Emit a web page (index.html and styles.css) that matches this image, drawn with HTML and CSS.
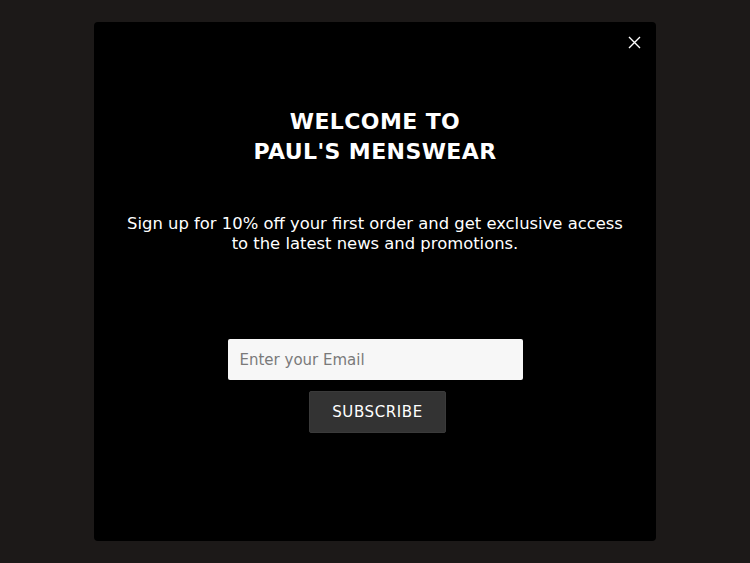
FILE: index.html
```html
<!DOCTYPE html>
<html lang="en">
<head>
    <meta charset="UTF-8">
    <meta name="viewport" content="width=device-width, initial-scale=1.0">
    <title>Paul's Menswear</title>
    <link rel="stylesheet" href="styles.css">
</head>
<body>
    <div class="popup">
        <button class="close-btn" aria-label="Close">
            <svg width="13" height="13" viewBox="0 0 13 13">
                <path d="M1 1 L12 12 M12 1 L1 12" stroke="#fff" stroke-width="1.4" fill="none"/>
            </svg>
        </button>
        <h1 class="title">WELCOME TO<br>PAUL'S MENSWEAR</h1>
        <p class="subtitle">Sign up for 10% off your first order and get exclusive access<br>to the latest news and promotions.</p>
        <form class="signup">
            <input type="email" class="email" placeholder="Enter your Email">
            <button type="button" class="subscribe">SUBSCRIBE</button>
        </form>
    </div>
</body>
</html>
```

FILE: styles.css
```css
body {
    margin: 0;
    height: 100vh;
    display: flex;
    justify-content: center;
    align-items: center;
    background-color: #1c1918;
    font-family: "DejaVu Sans", "Noto Sans", sans-serif;
}
.popup {
    width: 562px;
    height: 519px;
    box-sizing: border-box;
    background-color: #000;
    border-radius: 4px;
    color: #fff;
    position: relative;
    display: flex;
    flex-direction: column;
    align-items: center;
    padding-top: 85px;
}
.close-btn {
    position: absolute;
    top: 14px;
    right: 15px;
    background: none;
    border: none;
    padding: 0;
    line-height: 0;
    cursor: pointer;
}
.title {
    margin: 0;
    font-size: 22px;
    line-height: 30px;
    font-weight: 600;
    text-align: center;
    letter-spacing: 0.4px;
}
.subtitle {
    margin: 47px 0 0;
    font-size: 16.4px;
    line-height: 20px;
    text-align: center;
}
.signup {
    margin-top: 85px;
    display: flex;
    flex-direction: column;
    align-items: center;
    gap: 11px;
}
.email {
    width: 295px;
    height: 41px;
    box-sizing: border-box;
    border: none;
    border-radius: 2px;
    background-color: #f7f7f7;
    padding: 0 12px;
    font-family: inherit;
    font-size: 15px;
    color: #333;
}
.email::placeholder {
    color: #7a7a7a;
}
.subscribe {
    width: 137px;
    height: 42px;
    margin-left: 5px;
    border: 1px solid #3a3a3a;
    border-radius: 2px;
    background-color: #333;
    color: #fff;
    font-family: inherit;
    font-size: 15px;
    letter-spacing: 0.6px;
    cursor: pointer;
}
```
